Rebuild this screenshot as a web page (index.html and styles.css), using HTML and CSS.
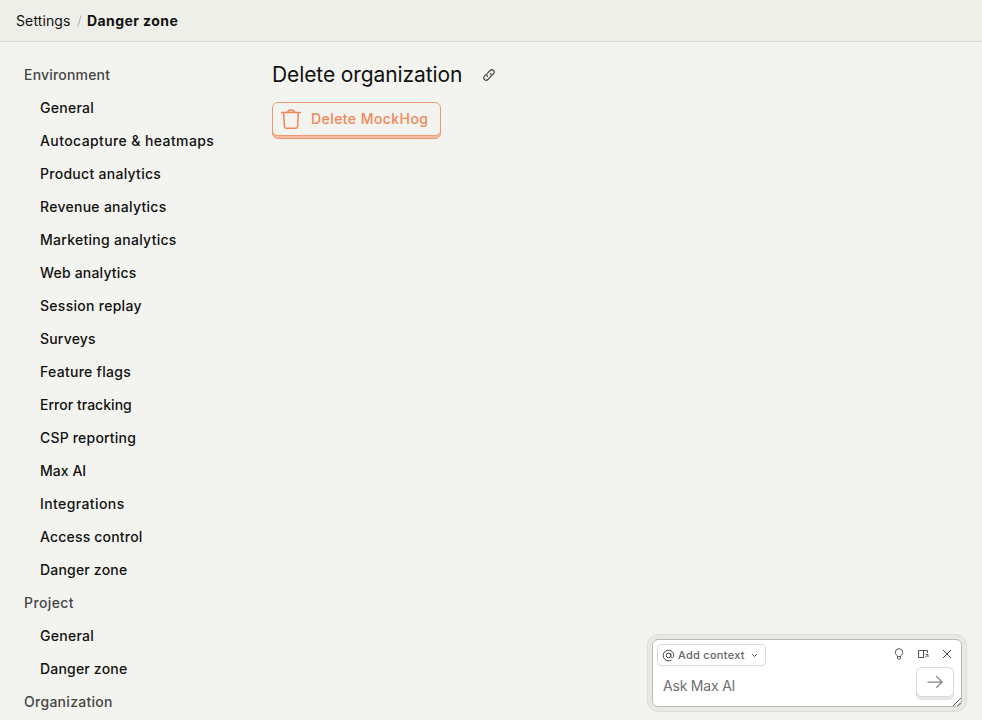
FILE: index.html
```html
<!DOCTYPE html>
<html lang="en">
<head>
<meta charset="utf-8">
<title>Danger zone</title>
<link rel="stylesheet" href="styles.css">
</head>
<body>
<header class="topbar"><span class="crumb">Settings</span><svg class="slash" width="5" height="12" viewBox="0 0 5 12" stroke="#aaa" stroke-width="1"><path d="M.8 11.500L4.200.5"/></svg><span class="current">Danger zone</span></header>
<div class="layout">
<nav class="sidebar">
<div class="group snug">Environment</div>
<a class="item">General</a>
<a class="item wide">Autocapture &amp; heatmaps</a>
<a class="item">Product analytics</a>
<a class="item">Revenue analytics</a>
<a class="item">Marketing analytics</a>
<a class="item snug">Web analytics</a>
<a class="item">Session replay</a>
<a class="item snug">Surveys</a>
<a class="item">Feature flags</a>
<a class="item tight">Error tracking</a>
<a class="item snug">CSP reporting</a>
<a class="item tight">Max AI</a>
<a class="item wide">Integrations</a>
<a class="item snug">Access control</a>
<a class="item snug">Danger zone</a>
<div class="group wide">Project</div>
<a class="item">General</a>
<a class="item snug">Danger zone</a>
<div class="group">Organization</div>
</nav>
<main class="content">
<h2 class="title"><span>Delete organization</span>
<svg class="link" width="14" height="14" viewBox="0 0 14 14" fill="none" stroke="#444" stroke-width="1.15" stroke-linecap="round"><path d="M5.500 8.500a2.400 2.400 0 0 1 0-3.400l2.600-2.600a2.400 2.400 0 0 1 3.400 3.400L10 7.400"/><path d="M8.500 5.500a2.400 2.400 0 0 1 0 3.400l-2.600 2.600a2.400 2.400 0 0 1-3.400-3.400L4 6.600"/></svg></h2>
<button class="delete"><span class="delete-face">
<svg width="20" height="20" viewBox="0 0 20 20" fill="none" stroke="currentColor" stroke-width="1.5"><path d="M0 3.500h20M2.600 3.500l.8 14q.1 1.700 1.700 1.700h9.800q1.600 0 1.700-1.700l.8-14M6.300 3.500C7.200.1 12.800.1 13.700 3.500"/></svg>
<span>Delete MockHog</span></span></button>
</main>
</div>
<section class="dock">
<div class="ask">
<div class="ask-top">
<button class="context"><svg width="13" height="13" viewBox="0 0 13 13" fill="none" stroke="#444" stroke-width="1"><circle cx="6.500" cy="6.500" r="2.300"/><path d="M8.800 4.200v3.100c0 2 3 1.800 3-.8a5.300 5.300 0 1 0-2.300 4.400"/></svg><span>Add context</span><svg class="chev" width="7" height="5" viewBox="0 0 7 5" fill="none" stroke="#444" stroke-width="1"><path d="M1.200 1.200l2.300 2.300 2.300-2.300"/></svg></button>
<div class="tools">
<svg width="12" height="12" viewBox="0 0 12 12" fill="none" stroke="#555"><path d="M4.500 8.500C4.400 7.300 2.300 6.700 2.300 4.400a3.700 3.700 0 0 1 7.400 0c0 2.300-2.100 2.900-2.200 4.100zM4.500 8.500v1.900q0 .6.600.6h1.800q.6 0 .6-.6V8.500"/></svg>
<svg width="12" height="12" viewBox="0 0 12 12" fill="none" stroke="#555"><path d="M6.500 9.500h-5v-7h9v2.500M6.500 2.500v7"/><path d="M8 9.500l2-2M8.500 6.500h2.500V9"/></svg>
<svg width="12" height="12" viewBox="0 0 12 12" fill="none" stroke="#444"><path d="M2 2l8 8M10 2l-8 8"/></svg>
</div>
</div>
<div class="ask-bottom"><span class="placeholder">Ask Max AI</span>
<button class="send"><span class="send-face"><svg width="16" height="14" viewBox="0 0 16 14" fill="none" stroke="#858585" stroke-width="1.250"><path d="M.5 7h14.500M9.300 1.200L15 7l-5.700 5.800"/></svg></span></button></div>
<svg class="grip" width="8" height="8" viewBox="0 0 8 8" stroke="#444" stroke-width=".9"><path d="M0 8l8-8M4.500 8L8 4.500"/></svg>
</div>
</section>
</body>
</html>
```
FILE: styles.css
```css
* { box-sizing: border-box; }
body { margin: 0; height: 720px; overflow: hidden; background: #f3f4ef; color: #111; font: 14px/20px Inter, sans-serif; }
button { font: inherit; margin: 0; padding: 0; border: 0; background: none; }
svg { display: block; flex: none; }
.topbar { height: 42px; display: flex; align-items: center; padding: 0 16px; background: #eeefe9; border-bottom: 1px solid #dadbd5; }
.crumb { width: 55px; letter-spacing: .12px; }
.slash { margin: 0 5px 0 6px; }
.current { font-weight: 700; letter-spacing: .42px; }
.layout { display: flex; padding: 16px 16px 0; }
.sidebar { width: 256px; flex: none; display: flex; flex-direction: column; }
.group, .item { height: 33px; line-height: 33px; font-weight: 500; letter-spacing: .28px; white-space: nowrap; }
.group { padding-left: 8px; color: #454545; }
.item { padding-left: 24px; }
.sidebar .wide { letter-spacing: .4px; }
.sidebar .snug { letter-spacing: .19px; }
.sidebar .tight { letter-spacing: .03px; }
.content { flex: 1; padding-top: 2px; }
.title { margin: 0; height: 30px; display: flex; align-items: center; font-size: 21px; line-height: 30px; font-weight: 400; letter-spacing: -.1px; }
.link { margin-left: 19.5px; }
.delete { display: block; margin-top: 12px; width: 169px; height: 37px; border: 1px solid #ee9670; border-radius: 6px; background: #f4bda3; color: #f28658; }
.delete-face { display: flex; align-items: center; gap: 10px; height: 33px; margin-bottom: 2px; padding-left: 8px; border-bottom: 1px solid #ee9670; border-radius: 5px; background: #f3f4ef; font-weight: 500; letter-spacing: .43px; }
.dock { position: absolute; left: 647px; top: 634px; width: 320px; height: 78px; padding: 4px; border: 1px solid #dcddd6; border-radius: 11px; background: #e8e9e2; }
.ask { position: relative; height: 68px; border: 1px solid #b9bab4; border-radius: 6px; background: #fff; padding: 4px 7px 0 4px; }
.ask-top { display: flex; justify-content: space-between; height: 22px; }
.context { display: flex; align-items: center; width: 109px; height: 22px; padding-left: 4px; border: 1px solid #dadbd5; border-radius: 4px; color: #666; font-size: 11px; font-weight: 500; letter-spacing: .27px; }
.context span { margin-left: 3px; }
.chev { margin-left: 6px; }
.tools { display: flex; gap: 12px; padding: 4px 1px 0 0; }
.ask-bottom { display: flex; justify-content: space-between; padding: 1px 0 0 6px; }
.placeholder { margin-top: 9px; color: #707070; letter-spacing: -.2px; }
.send { width: 38px; height: 33px; border: 1px solid #dadada; border-bottom-color: #e2e2e2; border-radius: 6px; background: #e8e8e8; }
.send-face { display: flex; align-items: center; justify-content: center; height: 29px; margin-bottom: 2px; border-bottom: 1px solid #dadada; border-radius: 5px; background: #fff; }
.grip { position: absolute; right: 0; bottom: 0; }
```
